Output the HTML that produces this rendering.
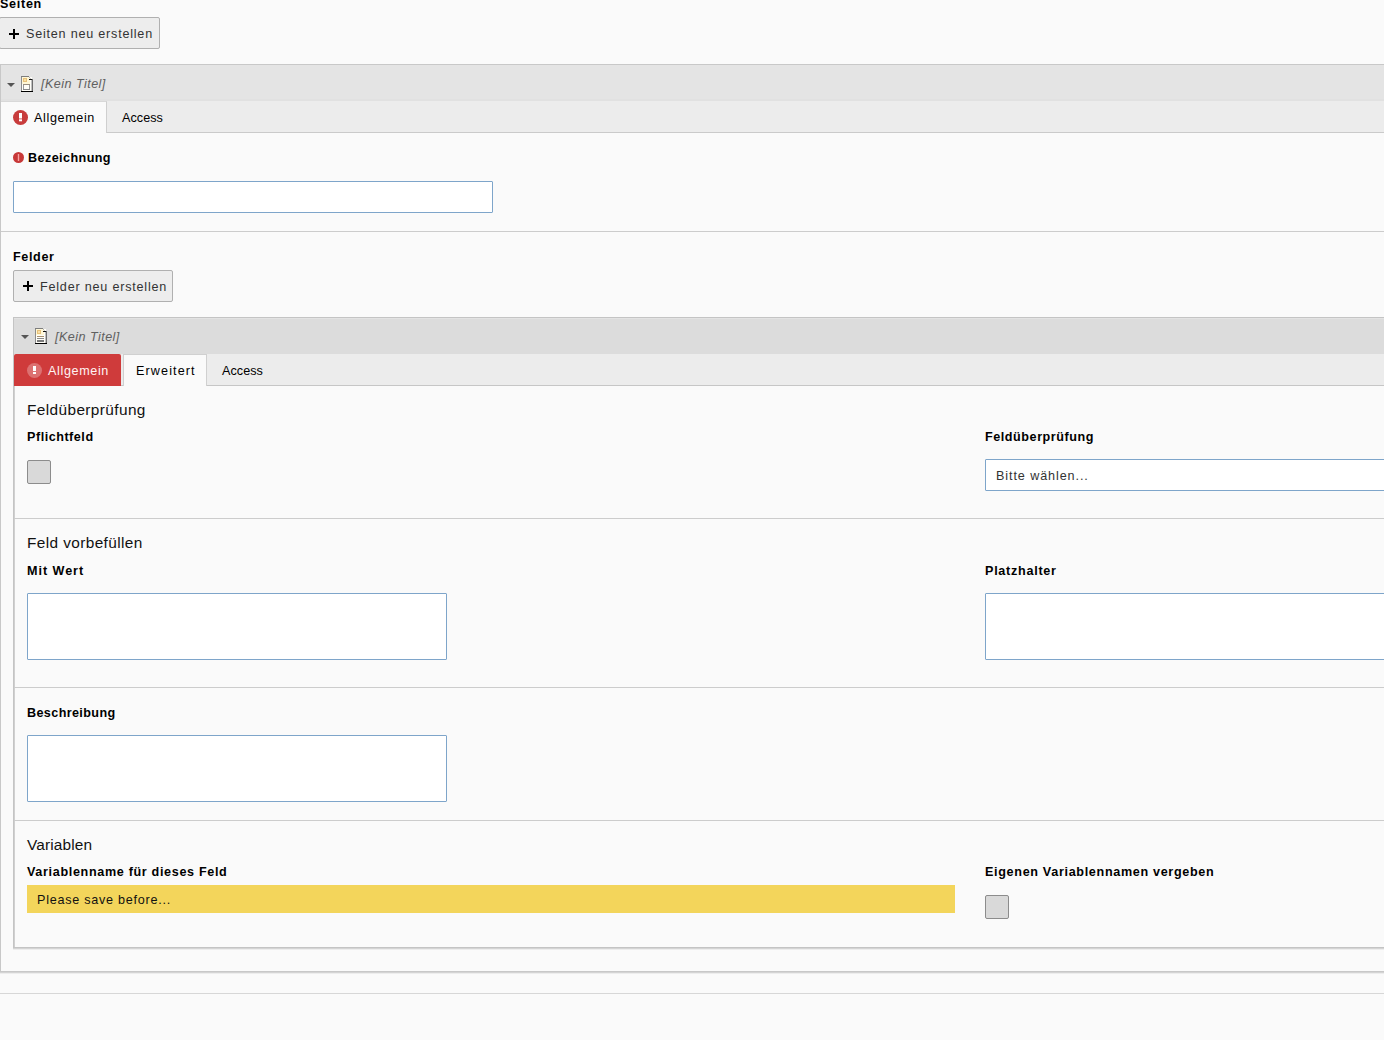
<!DOCTYPE html>
<html><head><meta charset="utf-8">
<style>
html,body{margin:0;padding:0;}
body{width:1384px;height:1040px;overflow:hidden;background:#fafafa;position:relative;font-family:"Liberation Sans",sans-serif;font-size:12.6px;color:#333;}
.a{position:absolute;}
.t{position:absolute;white-space:nowrap;line-height:1;}
.b{font-weight:bold;color:#000;}
.btn{position:absolute;box-sizing:border-box;height:32px;width:160px;border:1px solid #b0b0b0;background:#ededed;border-radius:2px;}
.plus{position:absolute;width:10px;height:10px;}
.plus:before{content:"";position:absolute;left:0;top:4px;width:10px;height:2px;background:#000;}
.plus:after{content:"";position:absolute;left:4px;top:0;width:2px;height:10px;background:#000;}
.hr{position:absolute;height:1px;background:#ccc;}
.inp{position:absolute;box-sizing:border-box;border:1px solid #7ea5ca;background:#fff;border-radius:1px;}
.cb{position:absolute;box-sizing:border-box;width:24px;height:24px;border:1px solid #8c8c8c;background:#d9d9d9;border-radius:2px;}
.it{font-style:italic;color:#606060;}
.h4{font-size:15.4px;color:#111;}
.caret{position:absolute;width:0;height:0;border-left:4px solid transparent;border-right:4px solid transparent;border-top:4px solid #555;}
</style></head><body>
<div class="btn" style="left:-1px;top:17px;width:161px;"></div>
<div class="plus" style="left:9px;top:29px;"></div>
<div class="a" style="left:0;top:64px;width:1400px;height:908px;box-sizing:border-box;border:1px solid #c8c8c8;border-right:none;background:#fafafa;box-shadow:0 1px 0 rgba(0,0,0,.1),0 2px 0 rgba(0,0,0,.05);"></div>
<div class="a" style="left:1px;top:65px;width:1400px;height:35px;background:#e4e4e4;"></div>
<div class="a" style="left:1px;top:100px;width:1400px;height:32px;background:#ececec;"></div>
<div class="a" style="left:1px;top:99px;width:1400px;height:2px;background:#e1e1e1;"></div>
<div class="a" style="left:1px;top:132px;width:1400px;height:1px;background:#cacaca;"></div>
<div class="a" style="left:1px;top:101px;width:106px;height:32px;box-sizing:border-box;background:#fafafa;border-top:1px solid #d8d8d8;border-right:1px solid #cfcfcf;"></div>
<div class="caret" style="left:7px;top:83px;"></div>
<svg class="a" style="left:13px;top:110px;" width="15" height="15" viewBox="0 0 15 15">
<circle cx="7.5" cy="7.5" r="7.5" fill="#c83c3c"/>
<rect x="6" y="3" width="3" height="5.5" fill="#fff"/>
<rect x="6" y="9.3" width="3" height="2" fill="#fff"/>
</svg>
<svg class="a" style="left:21px;top:76px;" width="12" height="16" viewBox="0 0 12 16" shape-rendering="crispEdges">
<rect x="1" y="1" width="10" height="14" fill="#fffef8"/>
<rect x="1" y="1" width="8" height="7" fill="#fff7d6"/>
<rect x="0" y="0" width="1" height="16" fill="#8c8c8c"/>
<rect x="0" y="0" width="8" height="1" fill="#7d7d7d"/>
<rect x="8" y="1" width="1" height="1" fill="#b0b0b0"/>
<rect x="9" y="2" width="1" height="1" fill="#c8c8c8"/>
<rect x="8" y="3" width="4" height="1" fill="#111"/>
<rect x="10" y="4" width="1" height="11" fill="#c0c0c0"/>
<rect x="11" y="3" width="1" height="13" fill="#6e6e6e"/>
<rect x="0" y="15" width="12" height="1" fill="#000"/>
<rect x="2" y="2" width="4" height="4" fill="#e8c27a"/>
<rect x="3" y="3" width="2" height="2" fill="#f9e0a8"/>
<rect x="2" y="8" width="7" height="1" fill="#9a8f80"/>
<rect x="2" y="9" width="1" height="5" fill="#9a9a9a"/>
<rect x="8" y="9" width="1" height="5" fill="#9a9a9a"/>
<rect x="2" y="13" width="7" height="1" fill="#8a8a8a"/>
</svg>
<svg class="a" style="left:13px;top:152px;" width="11" height="11" viewBox="0 0 11 11">
<circle cx="5.5" cy="5.5" r="5.5" fill="#c73838"/>
<rect x="4.8" y="2" width="1.4" height="7" fill="#f7a0a0"/>
</svg>
<div class="inp" style="left:13px;top:181px;width:480px;height:32px;"></div>
<div class="hr" style="left:1px;top:231px;width:1400px;"></div>
<div class="btn" style="left:13px;top:270px;"></div>
<div class="plus" style="left:23px;top:281px;"></div>
<div class="a" style="left:13px;top:317px;width:1400px;height:631px;box-sizing:border-box;border:1px solid #c4c4c4;border-right:none;background:#fafafa;box-shadow:inset 1px 0 0 #d0d0d0,0 1px 0 rgba(0,0,0,.1),0 2px 0 rgba(0,0,0,.05);"></div>
<div class="a" style="left:14px;top:318px;width:1400px;height:36px;background:#dcdcdc;"></div>
<div class="a" style="left:14px;top:318px;width:1400px;height:1px;background:#e3e3e3;"></div>
<div class="a" style="left:14px;top:354px;width:1400px;height:31px;background:#ececec;"></div>
<div class="a" style="left:14px;top:385px;width:1400px;height:1px;background:#c6c6c6;"></div>
<div class="a" style="left:14px;top:354px;width:107px;height:32px;background:#cf3b3b;border-radius:2px 2px 0 0;"></div>
<div class="a" style="left:123px;top:354px;width:84px;height:32px;box-sizing:border-box;background:#fafafa;border:1px solid #d0d0d0;border-bottom:none;"></div>
<div class="caret" style="left:21px;top:335px;"></div>
<svg class="a" style="left:27px;top:363px;" width="15" height="15" viewBox="0 0 15 15">
<circle cx="7.5" cy="7.5" r="7.5" fill="#fff" fill-opacity="0.28"/>
<rect x="6" y="3" width="3" height="5" fill="#fff"/>
<rect x="6" y="9" width="3" height="2" fill="#fff"/>
</svg>
<svg class="a" style="left:35px;top:328px;" width="12" height="16" viewBox="0 0 12 16" shape-rendering="crispEdges">
<rect x="1" y="1" width="10" height="14" fill="#fffef8"/>
<rect x="1" y="1" width="8" height="6" fill="#fff7d6"/>
<rect x="0" y="0" width="1" height="16" fill="#8c8c8c"/>
<rect x="0" y="0" width="8" height="1" fill="#7d7d7d"/>
<rect x="8" y="1" width="1" height="1" fill="#b0b0b0"/>
<rect x="9" y="2" width="1" height="1" fill="#c8c8c8"/>
<rect x="8" y="3" width="4" height="1" fill="#111"/>
<rect x="10" y="4" width="1" height="11" fill="#c0c0c0"/>
<rect x="11" y="3" width="1" height="13" fill="#6e6e6e"/>
<rect x="0" y="15" width="12" height="1" fill="#000"/>
<rect x="2" y="2" width="4" height="4" fill="#e8c27a"/>
<rect x="3" y="3" width="2" height="2" fill="#f9e0a8"/>
<rect x="2" y="8" width="7" height="1" fill="#a89070"/>
<rect x="2" y="10" width="7" height="1" fill="#8c8c8c"/>
<rect x="2" y="12" width="7" height="2" fill="#7a7a7a"/>
</svg>
<div class="cb" style="left:27px;top:460px;"></div>
<div class="inp" style="left:985px;top:459px;width:420px;height:32px;"></div>
<div class="hr" style="left:14px;top:518px;width:1400px;"></div>
<div class="inp" style="left:27px;top:593px;width:420px;height:67px;"></div>
<div class="inp" style="left:985px;top:593px;width:420px;height:67px;"></div>
<div class="hr" style="left:14px;top:687px;width:1400px;"></div>
<div class="inp" style="left:27px;top:735px;width:420px;height:67px;"></div>
<div class="hr" style="left:14px;top:820px;width:1400px;"></div>
<div class="a" style="left:27px;top:885px;width:928px;height:28px;background:#f3d55b;"></div>
<div class="cb" style="left:985px;top:895px;"></div>
<div class="hr" style="left:0;top:993px;width:1400px;background:#d7d7d7;"></div>
<div class="t b" style="left:0px;top:-2px;letter-spacing:0.7px;">Seiten</div>
<div class="t " style="left:26px;top:28px;letter-spacing:0.78px;">Seiten neu erstellen</div>
<div class="t it" style="left:41px;top:78px;letter-spacing:0.45px;">[Kein Titel]</div>
<div class="t " style="left:34px;top:112px;letter-spacing:0.63px;color:#000;">Allgemein</div>
<div class="t " style="left:122px;top:112px;letter-spacing:0.06px;color:#000;">Access</div>
<div class="t b" style="left:28px;top:152px;letter-spacing:0.42px;">Bezeichnung</div>
<div class="t b" style="left:13px;top:251px;letter-spacing:0.64px;">Felder</div>
<div class="t " style="left:40px;top:281px;letter-spacing:0.79px;">Felder neu erstellen</div>
<div class="t it" style="left:55px;top:331px;letter-spacing:0.45px;">[Kein Titel]</div>
<div class="t " style="left:48px;top:365px;letter-spacing:0.63px;color:#fff3f3;">Allgemein</div>
<div class="t " style="left:136px;top:365px;letter-spacing:1.11px;color:#000;">Erweitert</div>
<div class="t " style="left:222px;top:365px;letter-spacing:0.06px;color:#000;">Access</div>
<div class="t h4" style="left:27px;top:402px;letter-spacing:0.39px;">Feldüberprüfung</div>
<div class="t b" style="left:27px;top:431px;letter-spacing:0.52px;">Pflichtfeld</div>
<div class="t b" style="left:985px;top:431px;letter-spacing:0.55px;">Feldüberprüfung</div>
<div class="t " style="left:996px;top:470px;letter-spacing:0.91px;">Bitte wählen...</div>
<div class="t h4" style="left:27px;top:535px;letter-spacing:0.39px;">Feld vorbefüllen</div>
<div class="t b" style="left:27px;top:565px;letter-spacing:0.96px;">Mit Wert</div>
<div class="t b" style="left:985px;top:565px;letter-spacing:0.73px;">Platzhalter</div>
<div class="t b" style="left:27px;top:707px;letter-spacing:0.38px;">Beschreibung</div>
<div class="t h4" style="left:27px;top:837px;letter-spacing:0.15px;">Variablen</div>
<div class="t b" style="left:27px;top:866px;letter-spacing:0.66px;">Variablenname für dieses Feld</div>
<div class="t " style="left:37px;top:894px;letter-spacing:0.75px;color:#111;">Please save before...</div>
<div class="t b" style="left:985px;top:866px;letter-spacing:0.67px;">Eigenen Variablennamen vergeben</div>
</body></html>
